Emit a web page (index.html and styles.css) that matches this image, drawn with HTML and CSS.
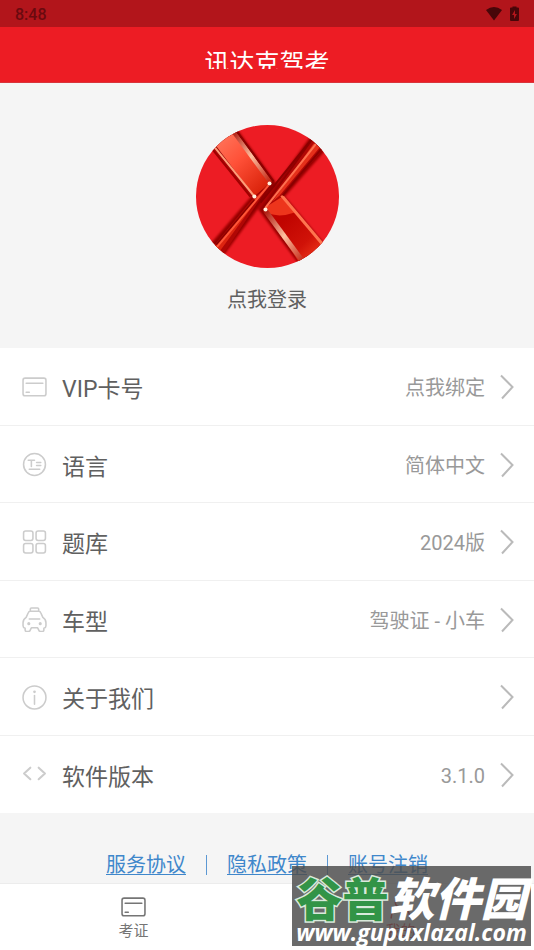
FILE: index.html
```html
<!DOCTYPE html>
<html lang="zh-CN">
<head>
<meta charset="utf-8">
<meta name="viewport" content="width=device-width, initial-scale=1">
<title>讯达克驾考</title>
<link rel="stylesheet" href="styles.css">
</head>
<body>
<svg class="defs" aria-hidden="true">
  <symbol id="card" viewBox="0 0 24 24"><rect x="1" y="3" width="22" height="17" rx="2"/><path d="M4 8H20M4 16.500H7"/></symbol>
  <symbol id="chevron" viewBox="0 0 14 26"><path d="M1 1.500 12.500 13 2 24.500"/></symbol>
</svg>
<div class="status">
  <span>8:48</span>
  <div class="status-icons">
    <svg width="18" height="16" viewBox="0 0 18 16"><path d="M1 4Q9-2 17 4L9 14.500Z"/></svg>
    <svg width="9" height="16" viewBox="0 0 9 16"><path fill-rule="evenodd" d="M2.500 1.500V.5H6.500V1.500H8Q9 1.500 9 2.500V14Q9 15 8 15H1Q0 15 0 14V2.500Q0 1.500 1 1.500ZM5 4 2 9H4V13L7 8H5Z"/></svg>
  </div>
</div>
<header class="bar"><h1>讯达克驾考</h1></header>
<main>
  <section class="profile">
    <button class="login" type="button">
      <svg class="avatar" viewBox="0 0 142 142" aria-hidden="true">
        <defs>
          <clipPath id="round"><circle cx="71" cy="71" r="71"/></clipPath>
          <linearGradient id="light" x1="0" y1="0" x2=".8" y2="1"><stop offset="0" stop-color="#ff8066"/><stop offset=".5" stop-color="#ff5138"/><stop offset="1" stop-color="#d82008"/></linearGradient>
          <linearGradient id="deep" x1="0" y1="0" x2=".8" y2="1"><stop offset="0" stop-color="#c00000"/><stop offset=".4" stop-color="#c00400"/><stop offset=".75" stop-color="#d01208"/><stop offset="1" stop-color="#f03a1c"/></linearGradient>
          <linearGradient id="edge" x1="0" y1="0" x2="1" y2="1"><stop offset="0" stop-color="#a81008"/><stop offset=".5" stop-color="#ffc0a0"/><stop offset="1" stop-color="#c02010"/></linearGradient>
          <filter id="soft" x="-20%" y="-20%" width="140%" height="140%"><feGaussianBlur stdDeviation="1.200"/></filter>
          <filter id="fine" x="-20%" y="-20%" width="140%" height="140%"><feGaussianBlur stdDeviation=".6"/></filter>
        </defs>
        <g clip-path="url(#round)">
          <rect width="142" height="142" fill="#ed1c24"/>
          <g fill="#8c0000" stroke="#a00006" stroke-width="2" filter="url(#soft)">
            <path d="M39 3 79 58 26 130 13 121 56 71 15 20Z"/>
            <path d="M115 11 63 84 106 142 129 121 87 71 130 22Z"/>
          </g>
          <path d="M17 17 36 3 74 57 58 71Z" fill="url(#light)"/>
          <path d="M74 58 58 71 16 122 26 130Z" fill="#b00705"/>
          <path d="M69 63 57 74 18 121 23 126Z" fill="#dc2410"/>
          <path d="M67 84 83 67 128 121 104 139Z" fill="url(#deep)"/>
          <path d="M67 83 82 68 98 87Q84 92 72 88Z" fill="#ed351c"/>
          <path d="M67 83 116 15 127 23 86 71Z" fill="#b00705"/>
          <path d="M76 76 117 18 123 22 83 70Z" fill="#e5301a"/>
          <g fill="none" filter="url(#fine)">
            <path d="M36 5 74 57" stroke="url(#edge)" stroke-width="4"/>
            <path d="M39 4 77 56" stroke="#8c0000" stroke-width="2"/>
            <path d="M16 19 58 71" stroke="#ff9c78" stroke-width="2"/>
            <path d="M13 20 54 71" stroke="#a00000" stroke-width="2"/>
            <path d="M72 60 20 122" stroke="#ff5638" stroke-width="2"/>
            <path d="M58 74 20 119" stroke="#8a0000" stroke-width="1.500"/>
            <path d="M68 84 107 137" stroke="url(#edge)" stroke-width="5"/>
            <path d="M85 70 127 120" stroke="#ff7550" stroke-width="3"/>
            <path d="M69 82 119 19" stroke="#ff7050" stroke-width="2"/>
            <path d="M86 70 126 22" stroke="#8a0000" stroke-width="2"/>
            <path d="M64 77 115 14" stroke="#8a0000" stroke-width="2"/>
          </g>
          <g fill="#fff1df" filter="url(#fine)"><circle cx="73" cy="58" r="2"/><circle cx="58" cy="71" r="2"/><circle cx="69" cy="84" r="2"/></g>
        </g>
      </svg>
      <span>点我登录</span>
    </button>
  </section>
  <nav class="list" aria-label="设置">
    <a class="row" href="#vip"><svg class="icon"><use href="#card"/></svg><span class="label">VIP卡号</span><span class="value">点我绑定</span><svg class="chevron"><use href="#chevron"/></svg></a>
    <a class="row" href="#language"><svg class="icon" viewBox="0 0 24 24"><circle cx="12" cy="12" r="10.500"/><path d="M6 8H12M9 8V14M14 10H18M14 13H18M7 16.500H17"/></svg><span class="label">语言</span><span class="value">简体中文</span><svg class="chevron"><use href="#chevron"/></svg></a>
    <a class="row" href="#bank"><svg class="icon" viewBox="0 0 24 24"><rect x="1.500" y="1" width="9" height="9" rx="2"/><rect x="13.500" y="1" width="9" height="9" rx="2"/><rect x="1.500" y="13" width="9" height="9" rx="2"/><rect x="13.500" y="13" width="9" height="9" rx="2"/></svg><span class="label">题库</span><span class="value">2024版</span><svg class="chevron"><use href="#chevron"/></svg></a>
    <a class="row" href="#vehicle"><svg class="icon" viewBox="0 0 24 24"><path d="M8 4V2Q8 1 9 1H15Q16 1 16 2V4M4 10 6 5.500Q6.500 4 8 4H16Q17.500 4 18 5.500L20 10Q23 12 23 15V18Q23 20 21 20.500V22Q21 23.500 19.500 23.500H18Q16.500 23.500 16 22L15 20H9L8 22Q7.500 23.500 6 23.500H4.500Q3 23.500 3 22V20.500Q1 20 1 18V15Q1 12 4 10ZM7 11.500H17"/><circle class="dot" cx="6.500" cy="16" r="1.500"/><circle class="dot" cx="17.500" cy="16" r="1.500"/></svg><span class="label">车型</span><span class="value">驾驶证 - 小车</span><svg class="chevron"><use href="#chevron"/></svg></a>
    <a class="row" href="#about"><svg class="icon" viewBox="0 0 24 24"><circle cx="12" cy="12" r="11"/><path d="M12 10V18.500"/><circle class="dot" cx="12" cy="6.500" r="1.300"/></svg><span class="label">关于我们</span><svg class="chevron"><use href="#chevron"/></svg></a>
    <a class="row" href="#version"><svg class="icon thick" viewBox="0 0 24 24"><path d="M8 5.500 2 11 8 16.500M16 5.500 22 11 16 16.500"/></svg><span class="label">软件版本</span><span class="value">3.1.0</span><svg class="chevron"><use href="#chevron"/></svg></a>
  </nav>
  <div class="legal"><a href="#terms">服务协议</a><i></i><a href="#privacy">隐私政策</a><i></i><a href="#cancel">账号注销</a></div>
</main>
<nav class="tabs" aria-label="主导航">
  <a href="#exam"><svg class="icon"><use href="#card"/></svg><span>考证</span></a>
  <a class="active" href="#mine"><svg class="icon" viewBox="0 0 24 24"><circle cx="12" cy="7" r="5"/><path d="M3 22Q3 13 12 13T21 22"/></svg><span>我的</span></a>
</nav>
<aside class="watermark">
  <div class="site"><span class="green">谷普</span><span class="white">软件园</span></div>
  <div class="url">www.gupuxlazal.com</div>
</aside>
</body>
</html>
```
FILE: styles.css
```css
* { box-sizing: border-box; }

body {
  position: relative;
  display: flex;
  flex-direction: column;
  min-height: 100vh;
  margin: 0;
  background: #f5f5f5;
  color: #606060;
  font-family: Roboto, "Noto Sans CJK SC", sans-serif;
  font-size: 20px;
}

a { color: inherit; text-decoration: none; }
svg { display: block; flex: none; }
.defs { position: absolute; width: 0; height: 0; }

.status {
  display: flex;
  align-items: center;
  justify-content: space-between;
  height: 27px;
  padding: 1px 15px 0;
  background: #b2151b;
  color: #6a0a0f;
  font-size: 16px;
  font-weight: 500;
}
.status-icons { display: flex; gap: 7px; fill: #480609; }

.bar {
  height: 56px;
  padding-top: 14px;
  background: #ed1c24;
  border-bottom: 1px solid #d8353b;
}
h1 {
  height: 28px;
  margin: 0;
  overflow: hidden;
  color: #fff;
  font-size: 25px;
  font-weight: 400;
  line-height: 46px;
  text-align: center;
}

main { flex: 1; }

.profile { display: flex; justify-content: center; padding: 42px 0 32px; }
.login {
  display: flex;
  flex-direction: column;
  align-items: center;
  gap: 16px;
  padding: 0;
  border: 0;
  background: none;
  color: inherit;
  font: inherit;
  line-height: 32px;
}
.avatar { width: 143px; height: 143px; }

.list {
  display: grid;
  grid-auto-rows: 1fr;
  min-height: 465px;
  background: #fff;
}
.row {
  display: flex;
  align-items: center;
  padding: 2px 20px 0 22px;
  border-bottom: 1px solid #f0f0f0;
}
.row:last-child { border-color: transparent; }
.icon {
  width: 25px;
  height: 25px;
  fill: none;
  stroke: #ccc;
  stroke-width: 1.500;
  stroke-linecap: round;
  stroke-linejoin: round;
}
.thick { stroke-width: 2; }
.dot { fill: #ccc; stroke: none; }
.label { flex: 1; margin-left: 15px; padding-top: 6px; font-size: 23px; line-height: 34px; }
.value { padding-top: 2px; color: #999; line-height: 30px; }
.chevron {
  width: 14px;
  height: 26px;
  margin-left: 15px;
  fill: none;
  stroke: #bababa;
  stroke-width: 2;
}

.legal {
  display: flex;
  align-items: center;
  justify-content: center;
  gap: 20px;
  padding-top: 37px;
  color: #3f87cb;
  line-height: 30px;
}
.legal a { text-decoration: underline; text-decoration-thickness: 1px; text-underline-offset: 2px; }
.legal i { width: 1px; height: 20px; background: #5c98d3; }

.tabs {
  display: flex;
  height: 67px;
  border-top: 1px solid #ececec;
  background: #fff;
  color: #757575;
  font-size: 15px;
  line-height: 22px;
}
.tabs a {
  display: flex;
  flex: 1;
  flex-direction: column;
  align-items: center;
  padding-top: 11px;
}
.tabs .icon { stroke: currentColor; }
.tabs .active { color: #ed1c24; }

.watermark {
  position: absolute;
  right: 3px;
  bottom: 4px;
  width: 239px;
  height: 80px;
  background: rgba(78, 78, 78, .84);
  color: #fff;
  font-weight: 700;
  text-align: center;
  white-space: nowrap;
}
.site {
  font-family: "Noto Sans CJK SC", sans-serif;
  font-size: 46px;
  font-weight: 900;
  line-height: 60px;
}
.green {
  color: #329447;
  -webkit-text-stroke: 3px #d9eadc;
  paint-order: stroke fill;
}
.white { font-style: italic; }
.url {
  margin-top: -8px;
  font-family: "Open Sans", sans-serif;
  font-size: 23px;
  font-style: italic;
  line-height: 28px;
}
```
